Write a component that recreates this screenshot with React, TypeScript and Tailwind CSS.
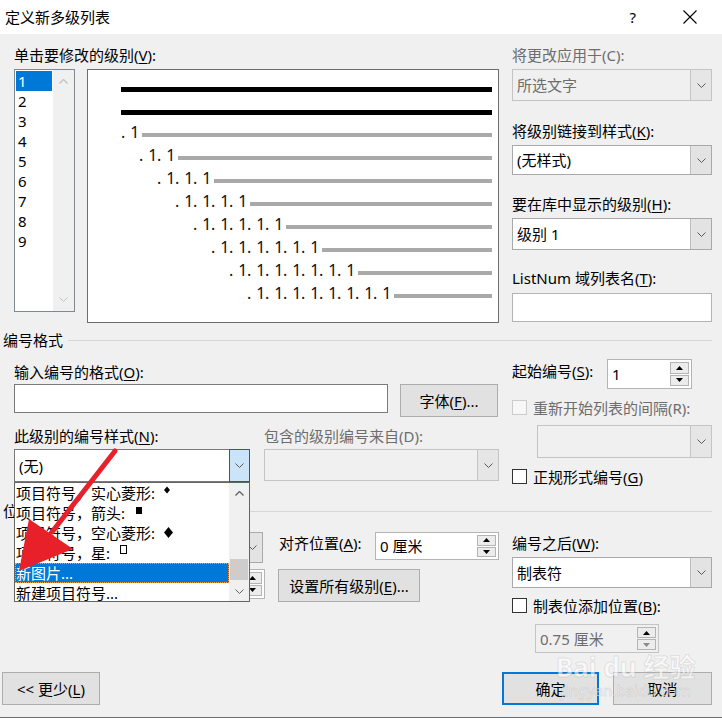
import clsx from 'clsx';

const PREVIEW_ROWS = [
  'pl-[33px]',
  'pl-[51px]',
  'pl-[69px]',
  'pl-[87px]',
  'pl-[105px]',
  'pl-[123px]',
  'pl-[141px]',
  'pl-[159px]',
];

function ChevronDown({ className }: { className?: string }) {
  return (
    <svg className={className} width="9" height="5" viewBox="0 0 9 5" fill="none" stroke="currentColor" strokeWidth="1">
      <path d="M0.5 0.5L4.5 4.5L8.5 0.5" />
    </svg>
  );
}

function ChevronUp({ className }: { className?: string }) {
  return (
    <svg className={className} width="9" height="5" viewBox="0 0 9 5" fill="none" stroke="currentColor" strokeWidth="1.3">
      <path d="M0.5 4.5L4.5 0.5L8.5 4.5" />
    </svg>
  );
}

function Tri({ up, className }: { up?: boolean; className?: string }) {
  return (
    <svg className={className} width="7" height="4" viewBox="0 0 7 4" fill="currentColor">
      {up ? <path d="M0 4L3.5 0L7 4Z" /> : <path d="M0 0L3.5 4L7 0Z" />}
    </svg>
  );
}

function Select({
  value,
  className,
  disabled,
  focused,
}: {
  value?: React.ReactNode;
  className?: string;
  disabled?: boolean;
  focused?: boolean;
}) {
  return (
    <div
      className={clsx(
        'flex border',
        disabled
          ? 'border-[#c4c4c4] bg-[#f0f0f0] text-[#6d6d6d]'
          : focused
            ? 'border-[#7a7a7a] bg-white'
            : 'border-[#a9a9a9] bg-white',
        className
      )}
    >
      <div className="flex flex-1 items-center pl-[4px]">{value}</div>
      <div
        className={clsx(
          'flex w-[21px] items-center justify-center',
          focused
            ? '-my-px -mr-px w-[21px] border border-[#1f5f9e] bg-[#cce4f7]'
            : disabled
              ? 'border-l border-[#c4c4c4] bg-[#e6e6e6]'
              : 'border-l border-[#bdbdbd] bg-[#e3e3e3]'
        )}
      >
        <ChevronDown className="text-[#5a5a5a]" />
      </div>
    </div>
  );
}

function Spin({ value, className, disabled }: { value: string; className?: string; disabled?: boolean }) {
  return (
    <div
      className={clsx(
        'flex border',
        disabled ? 'border-[#c4c4c4] bg-[#f0f0f0] text-[#6d6d6d]' : 'border-[#b4b4b4] bg-white',
        className
      )}
    >
      <div className="flex flex-1 items-center whitespace-nowrap pl-[4px]">{value}</div>
      <div className="flex w-[21px] flex-col gap-px py-[2px] pr-[2px]">
        <div className="flex flex-1 items-center justify-center border border-[#b4b4b4] bg-[#ececec]">
          <Tri up className="text-black" />
        </div>
        <div className="flex flex-1 items-center justify-center border border-[#b4b4b4] bg-[#ececec]">
          <Tri className={disabled ? 'text-[#8a8a8a]' : 'text-black'} />
        </div>
      </div>
    </div>
  );
}

function Checkbox({ disabled }: { disabled?: boolean }) {
  return (
    <div
      className={clsx(
        'h-[15px] w-[15px] shrink-0 border',
        disabled ? 'border-[#cccccc] bg-[#f7f7f7]' : 'border-[#333333] bg-white'
      )}
    />
  );
}

function Button({ children, className }: { children: React.ReactNode; className?: string }) {
  return (
    <div className={clsx('flex items-center justify-center whitespace-nowrap border border-[#adadad] bg-[#e1e1e1]', className)}>
      {children}
    </div>
  );
}

function Separator({ label, className }: { label: string; className?: string }) {
  return (
    <div className={clsx('flex h-[20px] items-center pl-[3px]', className)}>
      <span>{label}</span>
      <div className="ml-[5px] mr-[10px] h-px flex-1 bg-[#d7d7d7]" />
    </div>
  );
}

function ListBox() {
  return (
    <div className="flex h-[243px] w-[61px] border border-[#828790] bg-white">
      <div className="flex w-[38px] flex-col p-px">
        {['1', '2', '3', '4', '5', '6', '7', '8', '9'].map((n, i) => (
          <div
            key={n}
            className={clsx('h-[20px] pl-[2px] leading-[20px]', i === 0 && 'bg-[#0078d7] text-white')}
          >
            {n}
          </div>
        ))}
      </div>
      <div className="flex flex-1 flex-col items-center justify-between bg-[#f0f0f0] py-[9px]">
        <ChevronUp className="text-[#c2c2c2]" />
        <ChevronDown className="text-[#c2c2c2]" />
      </div>
    </div>
  );
}

function Preview() {
  return (
    <div className="ml-[12px] flex h-[254px] w-[412px] flex-col border border-[#6e6e6e] bg-white pl-[33px] pr-[6px]">
      <div className="mt-[17px] h-[5px] bg-black" />
      <div className="mt-[18px] h-[5px] bg-black" />
      <div className="mt-[5px] -ml-[33px] flex flex-col">
        {PREVIEW_ROWS.map((pad, i) => (
          <div key={pad} className={clsx('flex h-[23px] items-center text-[16px] text-[#111]', pad)}>
            {Array.from({ length: i + 1 }, (_, j) => (
              <span key={j} className="flex w-[18px] shrink-0">
                <span>.</span>
                <span className="ml-[5px]">1</span>
              </span>
            ))}
            <div className="ml-[3px] mt-[7px] h-[4px] flex-1 bg-[#a9a9a9]" />
          </div>
        ))}
      </div>
    </div>
  );
}

function Diamond({ size, className }: { size: number; className?: string }) {
  return (
    <svg className={className} width={size} height={size + 2} viewBox="0 0 10 12">
      <path d="M5 0L10 6L5 12L0 6Z" fill="black" />
    </svg>
  );
}

function BulletList() {
  return (
    <div className="absolute left-[14px] top-[482px] flex h-[120px] w-[236px] border border-[#646464] bg-white">
      <div className="flex flex-1 flex-col">
        <div className="flex h-[20px] items-start pl-px leading-[20px]">
          项目符号，实心菱形:
          <Diamond size={6} className="ml-[9px] mt-[3px]" />
        </div>
        <div className="flex h-[20px] items-start pl-px leading-[20px]">
          项目符号，箭头:
          <div className="ml-[11px] mt-[4px] h-[7px] w-[6px] bg-black" />
        </div>
        <div className="flex h-[20px] items-start pl-px leading-[20px]">
          项目符号，空心菱形:
          <Diamond size={9} className="ml-[9px] mt-[4px]" />
        </div>
        <div className="flex h-[20px] items-start pl-px leading-[20px]">
          项目符号，星:
          <div className="ml-[10px] mt-[2px] h-[9px] w-[7px] border border-black" />
        </div>
        <div className="flex h-[20px] items-center bg-[#0078d7] pl-px text-white outline-1 -outline-offset-1 outline-dotted outline-[#f5a04a]">
          新图片...
        </div>
        <div className="flex h-[20px] items-center pl-px">新建项目符号...</div>
      </div>
      <div className="flex w-[20px] flex-col items-center bg-[#f0f0f0]">
        <div className="flex h-[20px] items-center">
          <ChevronUp className="text-[#606060]" />
        </div>
        <div className="mb-[1px] mt-auto h-[21px] w-[18px] bg-[#cdcdcd]" />
        <div className="flex h-[20px] items-center">
          <ChevronDown className="text-[#606060]" />
        </div>
      </div>
    </div>
  );
}

function RedArrow() {
  return (
    <svg className="pointer-events-none absolute left-0 top-0" width="722" height="718" viewBox="0 0 722 718">
      <line x1="115" y1="451" x2="52" y2="532" stroke="#e8202a" strokeWidth="5" strokeLinecap="round" />
      <path d="M19 571L29 519L73 549Z" fill="#e8202a" />
    </svg>
  );
}

function Watermark() {
  return (
    <div className="pointer-events-none absolute left-[556px] top-[652px] flex flex-col items-center text-white/60 [-webkit-text-stroke:1px_rgba(120,120,120,0.18)]">
      <div className="text-[26px] font-bold leading-[30px]">Bai du 经验</div>
      <div className="text-[15px] leading-[16px]">jingyan.baidu.com</div>
    </div>
  );
}

export default function App() {
  return (
    <div className="relative h-[718px] w-[722px] overflow-hidden bg-[#f0f0f0] font-['Noto_Sans','Noto_Sans_CJK_SC',sans-serif] text-[15px] leading-[20px] text-black">
      {/* Title bar */}
      <div className="flex h-[34px] items-center bg-white pl-[5px]">
        <span>定义新多级列表</span>
        <span className="ml-auto">?</span>
        <svg className="ml-[47px] mr-[25px]" width="14" height="14" viewBox="0 0 14 14" stroke="black" strokeWidth="1.1">
          <path d="M0.5 0.5L13.5 13.5M13.5 0.5L0.5 13.5" />
        </svg>
      </div>

      {/* Level picker + preview */}
      <div className="flex pl-[14px] pt-[11px]">
        <div className="flex w-[485px] flex-col">
          <div className="h-[20px]">
            单击要修改的级别(<u className="underline-offset-2">V</u>):
          </div>
          <div className="mt-[4px] flex">
            <ListBox />
            <Preview />
          </div>
        </div>
        <div className="ml-[13px] flex w-[200px] flex-col">
          <div className="h-[20px] text-[#6d6d6d]">将更改应用于(C):</div>
          <Select disabled value="所选文字" className="mt-[4px] h-[32px]" />
          <div className="mt-[20px] h-[20px]">
            将级别链接到样式(<u className="underline-offset-2">K</u>):
          </div>
          <Select value="(无样式)" className="mt-[4px] h-[30px]" />
          <div className="mt-[19px] h-[20px]">
            要在库中显示的级别(<u className="underline-offset-2">H</u>):
          </div>
          <Select value="级别 1" className="mt-[4px] h-[32px]" />
          <div className="mt-[18px] h-[20px]">
            ListNum 域列表名(<u className="underline-offset-2">T</u>):
          </div>
          <div className="mt-[5px] h-[29px] border border-[#b4b4b4] bg-white" />
        </div>
      </div>

      <Separator label="编号格式" className="mt-[7px]" />

      {/* Number format */}
      <div className="flex pl-[14px]">
        <div className="flex w-[485px] flex-col">
          <div className="mt-[12px] h-[20px]">
            输入编号的格式(<u className="underline-offset-2">O</u>):
          </div>
          <div className="mt-[2px] flex items-start">
            <div className="h-[29px] w-[374px] border border-[#7a7a7a] bg-white" />
            <Button className="ml-[12px] h-[33px] w-[98px]">
              字体(<u className="underline-offset-2">F</u>)...
            </Button>
          </div>
          <div className="mt-[9px] flex h-[20px]">
            <span className="w-[250px]">
              此级别的编号样式(<u className="underline-offset-2">N</u>):
            </span>
            <span className="text-[#6d6d6d]">包含的级别编号来自(D):</span>
          </div>
          <div className="mt-[3px] flex items-start">
            <Select focused value="(无)" className="h-[33px] w-[236px]" />
            <Select disabled className="ml-[14px] h-[32px] w-[235px]" />
          </div>
        </div>
        <div className="ml-[13px] flex w-[200px] flex-col">
          <div className="mt-[9px] flex items-start">
            <span className="w-[95px] pt-[2px]">
              起始编号(<u className="underline-offset-2">S</u>):
            </span>
            <Spin value="1" className="h-[30px] w-[85px]" />
          </div>
          <div className="mt-[11px] flex h-[15px] items-center">
            <Checkbox disabled />
            <span className="ml-[6px] whitespace-nowrap text-[#6d6d6d]">重新开始列表的间隔(R):</span>
          </div>
          <Select disabled className="ml-[25px] mt-[10px] h-[33px] w-[175px]" />
          <div className="mt-[11px] flex h-[15px] items-center">
            <Checkbox />
            <span className="ml-[6px]">
              正规形式编号(<u className="underline-offset-2">G</u>)
            </span>
          </div>
        </div>
      </div>

      <Separator label="位置" className="mt-[17px]" />

      {/* Position */}
      <div className="flex pl-[14px]">
        <div className="flex w-[485px] flex-col">
          <div className="mt-[11px] flex items-start">
            <span className="w-[136px] whitespace-nowrap pt-px">编号对齐方式(U):</span>
            <Select value="左对齐" className="h-[31px] w-[113px]" />
            <span className="ml-[16px] w-[96px] whitespace-nowrap pt-px">
              对齐位置(<u className="underline-offset-2">A</u>):
            </span>
            <Spin value="0 厘米" className="h-[28px] w-[124px]" />
          </div>
          <div className="mt-[6px] flex items-start">
            <span className="w-[136px] whitespace-nowrap pt-[4px]">文本缩进位置(I):</span>
            <Spin value="0.75 厘米" className="h-[30px] w-[115px]" />
            <Button className="ml-[13px] h-[33px] w-[142px]">
              设置所有级别(<u className="underline-offset-2">E</u>)...
            </Button>
          </div>
        </div>
        <div className="ml-[13px] flex w-[200px] flex-col">
          <div className="mt-[12px] h-[20px]">
            编号之后(<u className="underline-offset-2">W</u>):
          </div>
          <Select value="制表符" className="mt-[4px] h-[31px]" />
          <div className="mt-[10px] flex h-[15px] items-center">
            <Checkbox />
            <span className="ml-[6px]">
              制表位添加位置(<u className="underline-offset-2">B</u>):
            </span>
          </div>
          <Spin disabled value="0.75 厘米" className="ml-[23px] mt-[11px] h-[29px] w-[124px]" />
        </div>
      </div>

      {/* Footer buttons */}
      <div className="mt-[19px] flex pl-[2px] pr-[10px]">
        <Button className="h-[33px] w-[98px]">
          &lt;&lt; 更少(<u className="underline-offset-2">L</u>)
        </Button>
        <div className="ml-auto flex">
          <div className="flex h-[33px] w-[97px] items-center justify-center border-2 border-[#0078d7] bg-[#e1e1e1]">
            确定
          </div>
          <Button className="ml-[14px] h-[33px] w-[99px]">取消</Button>
        </div>
      </div>
      <div className="mt-[12px] h-px bg-[#6d6d6d]" />

      <BulletList />
      <RedArrow />
      <Watermark />
    </div>
  );
}
